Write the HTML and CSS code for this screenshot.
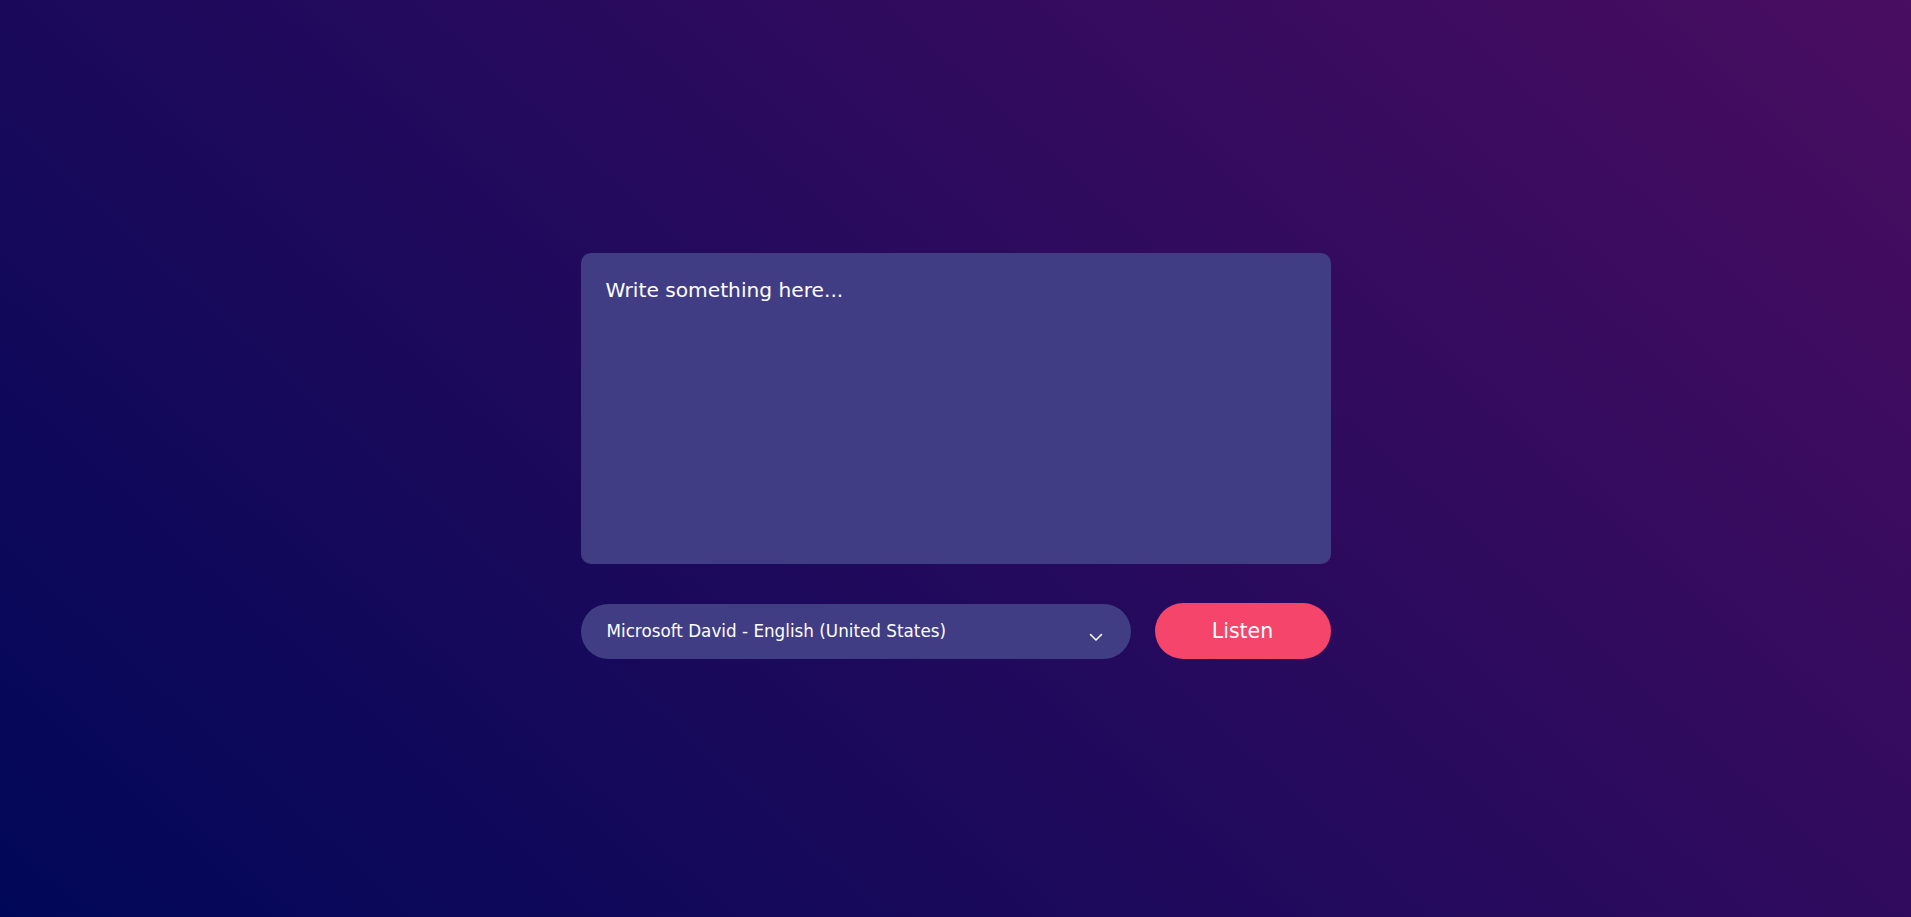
FILE: index.html
```html
<!DOCTYPE html>
<html lang="en">
<head>
<meta charset="utf-8">
<title>Text to Speech</title>
<link rel="stylesheet" href="styles.css">
</head>
<body>
<main class="app">
  <textarea class="text-input" placeholder="Write something here..."></textarea>
  <div class="controls">
    <div class="select-wrap">
      <select class="voice-select">
        <option>Microsoft David - English (United States)</option>
      </select>
      <svg class="chevron" width="14" height="9" viewBox="0 0 14 9" aria-hidden="true">
        <path d="M1.5 1.5 L7 7 L12.5 1.5" fill="none" stroke="#ffffff" stroke-width="1.6" stroke-linecap="round" stroke-linejoin="round"/>
      </svg>
    </div>
    <button class="listen-btn" type="button">Listen</button>
  </div>
</main>
</body>
</html>
```

FILE: styles.css
```css
* {
  box-sizing: border-box;
}

html, body {
  margin: 0;
  height: 100%;
}

body {
  min-height: 100vh;
  background: linear-gradient(42deg, #010758 0%, #490d61 100%);
  font-family: "DejaVu Sans", Verdana, sans-serif;
  display: flex;
  align-items: center;
  justify-content: center;
  padding-bottom: 5px;
}

.app {
  width: 750px;
  display: flex;
  flex-direction: column;
  gap: 39px;
}

.text-input {
  width: 100%;
  height: 311px;
  resize: none;
  border: none;
  outline: none;
  border-radius: 10px;
  background: #403d84;
  color: #ffffff;
  font-family: "DejaVu Sans", Verdana, sans-serif;
  font-size: 20.2px;
  line-height: 1.2;
  padding: 25px 25px;
}

.text-input::placeholder {
  color: #ffffff;
  opacity: 1;
}

.controls {
  display: flex;
  gap: 24px;
  align-items: center;
}

.select-wrap {
  position: relative;
  width: 550px;
  flex: 0 0 550px;
}

.voice-select {
  width: 100%;
  height: 55px;
  appearance: none;
  -webkit-appearance: none;
  border: none;
  outline: none;
  border-radius: 28px;
  background: #403d84;
  color: #ffffff;
  font-family: "DejaVu Sans", Verdana, sans-serif;
  font-size: 16.8px;
  padding: 0 60px 0 26px;
}

.chevron {
  position: absolute;
  right: 28px;
  top: 29px;
  pointer-events: none;
}

.listen-btn {
  flex: 1;
  height: 56px;
  border: none;
  border-radius: 28px;
  background: #f5456a;
  color: #ffffff;
  font-family: "DejaVu Sans", Verdana, sans-serif;
  font-size: 20.5px;
  cursor: pointer;
}
```
